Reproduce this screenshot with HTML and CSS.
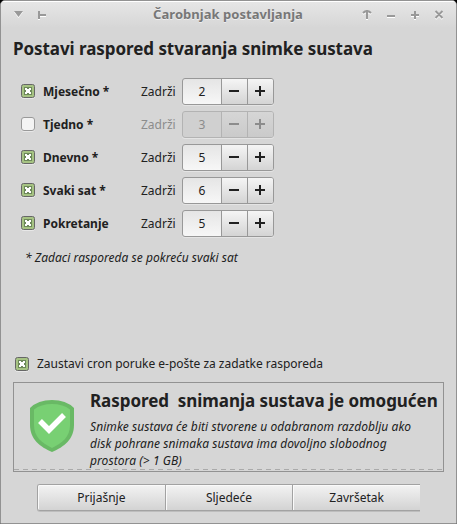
FILE: index.html
```html
<!DOCTYPE html>
<html lang="hr">
<head>
<meta charset="utf-8">
<title>Čarobnjak postavljanja</title>
<link rel="stylesheet" href="styles.css">
</head>
<body>
<svg class="symbols" width="0" height="0">
  <symbol id="check" viewBox="0 0 14 14">
    <rect x=".5" y=".5" width="13" height="13" rx="2" fill="#a6c383" stroke="#666"/>
    <rect x="3" y="3" width="8" height="8" fill="#6d885a"/>
    <path d="M4 4h2v1h2v-1h2v2h-1v2h1v2h-2v-1h-2v1h-2v-2h1v-2h-1z" fill="#fff"/>
  </symbol>
</svg>
<div class="window">
  <header class="titlebar">
    <svg class="controls" width="36" height="16" viewBox="0 0 36 16"><g fill="#fff" transform="translate(0 1)"><path d="M0 4h9L4.500 10z"/><path d="M24 4h2v3h6v2h-6v3h-2z"/></g><g fill="#999"><path d="M0 4h9L4.500 10z"/><path d="M24 4h2v3h6v2h-6v3h-2z"/></g></svg>
    <h1 class="title">Čarobnjak postavljanja</h1>
    <svg class="controls" width="82" height="16" viewBox="0 0 82 16"><g stroke="#fff" stroke-width="2" fill="none" transform="translate(0 1)"><path d="M5 3v9M1 6q2-2 4-2t4 2M25 9h8M49 8h8M53 4v8M73.500 4l7 7M80.500 4l-7 7"/></g><g stroke="#999" stroke-width="2" fill="none"><path d="M5 3v9M1 6q2-2 4-2t4 2M25 9h8M49 8h8M53 4v8M73.500 4l7 7M80.500 4l-7 7"/></g></svg>
  </header>
  <main class="content">
    <h2 class="heading">Postavi raspored stvaranja snimke sustava</h2>
    <div class="schedule">
      <div class="row"><svg class="box"><use href="#check"/></svg><b class="name">Mjesečno *</b><span class="keep">Zadrži</span><div class="spin"><span class="value">2</span><button class="step"><i class="minus"></i></button><button class="step"><i class="minus plus"></i></button></div></div>
      <div class="row off"><span class="box empty"></span><b class="name">Tjedno *</b><span class="keep">Zadrži</span><div class="spin"><span class="value">3</span><button class="step"><i class="minus"></i></button><button class="step"><i class="minus plus"></i></button></div></div>
      <div class="row"><svg class="box"><use href="#check"/></svg><b class="name">Dnevno *</b><span class="keep">Zadrži</span><div class="spin"><span class="value">5</span><button class="step"><i class="minus"></i></button><button class="step"><i class="minus plus"></i></button></div></div>
      <div class="row"><svg class="box"><use href="#check"/></svg><b class="name">Svaki sat *</b><span class="keep">Zadrži</span><div class="spin"><span class="value">6</span><button class="step"><i class="minus"></i></button><button class="step"><i class="minus plus"></i></button></div></div>
      <div class="row"><svg class="box"><use href="#check"/></svg><b class="name">Pokretanje</b><span class="keep">Zadrži</span><div class="spin"><span class="value">5</span><button class="step"><i class="minus"></i></button><button class="step"><i class="minus plus"></i></button></div></div>
    </div>
    <p class="note">* Zadaci rasporeda se pokreću svaki sat</p>
    <div class="cron"><svg class="box"><use href="#check"/></svg><span class="cron-label">Zaustavi cron poruke e-pošte za zadatke rasporeda</span></div>
    <section class="status">
      <svg class="shield" width="44" height="52" viewBox="0 0 44 52"><path d="M0 8Q8 0 22 0T44 8V25C44 39 34 47 22 52C10 47 0 39 0 25Z" fill="#69b965"/><path d="M4 9.500Q11 4 22 4T40 9.500V25C40 37 32 43 22 48C12 43 4 37 4 25Z" fill="#78d073"/><path d="M10 21L19 30L34 15" fill="none" stroke="#fff" stroke-width="5.500"/></svg>
      <div class="message">
        <h3 class="status-title">Raspored&nbsp; snimanja sustava je omogućen</h3>
        <p class="status-text"><span class="line">Snimke sustava će biti stvorene u odabranom razdoblju ako</span><span class="line">disk pohrane snimaka sustava ima dovoljno slobodnog</span><span class="line">prostora (&gt; 1 GB)</span></p>
      </div>
    </section>
    <footer class="actions"><button class="action">Prijašnje</button><button class="action">Sljedeće</button><button class="action">Završetak</button></footer>
  </main>
</div>
</body>
</html>
```
FILE: styles.css
```css
* { box-sizing: border-box; }
body { margin: 0; background: #000; font: 12px/17px "Noto Sans", sans-serif; color: #212121; overflow: hidden; }
h1, h2, h3, p { margin: 0; white-space: nowrap; }
button { font: inherit; color: inherit; padding: 0; border: 0; }
.symbols { display: block; }
.window { width: 457px; height: 524px; border: 1px solid #929292; border-radius: 5px 5px 0 0; background: #d6d6d6; overflow: hidden; }
.titlebar { height: 27px; padding: 0 12px 0 13px; display: flex; align-items: center; justify-content: space-between; background: linear-gradient(#e6e6e6, #d6d6d6); box-shadow: inset 0 1px #fff; }
.title { font-size: 13px; letter-spacing: .04px; color: #777; text-shadow: 0 1px #eee; margin-left: 44px; }
.content { display: flex; flex-direction: column; height: 495px; }
.heading { font-size: 17px; letter-spacing: -.06px; line-height: 24px; margin: 9px 0 0 12px; }
.schedule { display: flex; flex-direction: column; gap: 6px; margin: 17px 0 0 20px; }
.row { display: flex; height: 27px; align-items: center; }
.box { width: 14px; height: 14px; flex: none; filter: drop-shadow(0 1px #e8e8e8); }
.row .box { margin-bottom: 1px; }
.empty { border: 1px solid #999; border-radius: 3px; background: #f4f4f4; }
.name { width: 98px; margin-left: 8px; }
.keep { width: 41px; }
.off .keep { color: #8c8c8c; }
.spin { display: flex; width: 92px; height: 27px; border: 1px solid #989898; border-radius: 3px; background: linear-gradient(#e5e5e5, #f7f7f7); box-shadow: 0 1px #e4e4e4; overflow: hidden; }
.value { width: 38px; text-align: center; line-height: 26px; }
.step { width: 26px; border-left: 1px solid #989898; background: linear-gradient(#f5f5f5, #d4d4d4); display: flex; align-items: center; justify-content: center; padding: 0 1px 1px 0; }
.off .spin { background: #d0d0d0; border-color: #b3b3b3; color: #8c8c8c; }
.off .step { background: linear-gradient(#d6d6d6, #cacaca); border-color: #b3b3b3; }
.minus { display: block; width: 10px; height: 10px; background: linear-gradient(currentColor, currentColor) center / 10px 2px no-repeat; }
.plus { background: linear-gradient(currentColor, currentColor) center / 10px 2px no-repeat, linear-gradient(currentColor, currentColor) center / 2px 10px no-repeat; }
.note { font-style: italic; letter-spacing: .03px; margin: 12px 0 0 24px; }
.cron { display: flex; align-items: center; gap: 8px; margin: 89px 0 0 14px; height: 17px; }
.cron-label { letter-spacing: -.02px; }
.status { width: 431px; height: 90px; margin: 10px 0 0 12px; border: 1px solid #929292; display: flex; background: repeating-linear-gradient(90deg, #aaa 0 5px, #d6d6d6 5px 9px) 0 86px / 100% 1px no-repeat; }
.shield { margin: 17px 0 0 16px; flex: none; }
.message { margin: 6px 0 0 16px; }
.status-title { font-size: 17px; letter-spacing: -.05px; line-height: 24px; }
.status-text { font-style: italic; letter-spacing: .07px; margin-top: 5px; }
.line { display: block; width: max-content; }
.actions { display: flex; width: 383px; height: 27px; margin: 12px 0 0 36px; border: 1px solid #a2a2a2; border-right: 0; border-radius: 3px 0 0 3px; box-shadow: 0 1px #bdbdbd; overflow: hidden; }
.action { flex: 1; background: linear-gradient(#f3f3f3, #d3d3d3); box-shadow: inset 1px 1px #fafafa; }
.action + .action { border-left: 1px solid #a2a2a2; }
```
